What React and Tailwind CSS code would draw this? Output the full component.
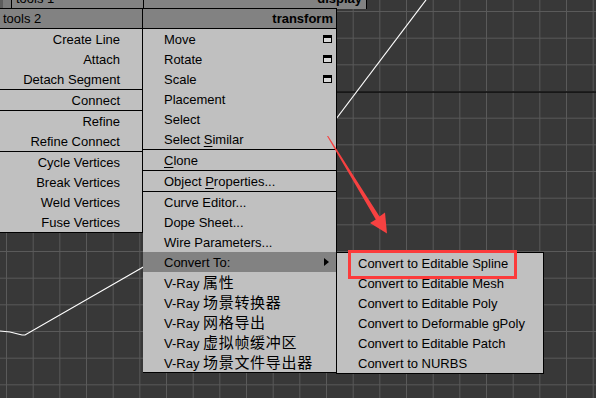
import React from "react";

const FONT = "font-['Liberation_Sans','Noto_Sans_CJK_SC',sans-serif]";

function Row({ children, right, icon, arrow, active }) {
  return (
    <div
      className={`h-[20px] pt-[1px] leading-[19px] flex items-center whitespace-nowrap ${
        right ? "justify-end pr-[22px]" : "pl-[21px] pr-[3px]"
      } ${active ? "bg-[#828282]" : ""}`}
    >
      <span className={right ? "" : "flex-1"}>{children}</span>
      {icon && (
        <span className="w-[9px] h-[8px] mr-[1px] -mt-[1px] border border-black border-t-[3px] bg-[#d8d8d8]" />
      )}
      {arrow && (
        <span className="mr-[4px] -mt-[1px] w-0 h-0 border-y-[4px] border-y-transparent border-l-[5px] border-l-black" />
      )}
    </div>
  );
}

function Cjk({ children }) {
  return <span className="text-[15px] tracking-[0.7px]">{children}</span>;
}

function Viewport() {
  const vs = [];
  for (let i = 0; i < 23; i++) vs.push(6.5 + i * 26.667);
  const hs = [];
  for (let i = 0; i < 16; i++) hs.push(11.5 + i * 26.667);
  return (
    <svg className="absolute inset-0" width="596" height="398">
      <rect width="596" height="398" fill="#383838" />
      {vs.map((x) => (
        <line key={"v" + x} x1={x} y1="0" x2={x} y2="398" stroke="#5a5a5a" strokeWidth="1" />
      ))}
      {hs.map((y) => (
        <line key={"h" + y} x1="0" y1={y} x2="596" y2={y} stroke="#5a5a5a" strokeWidth="1" />
      ))}
      <line x1="0" y1="92" x2="596" y2="92" stroke="#0c0c0c" strokeWidth="1.5" />
      <polyline points="0,331 10,332 22,335 25,335 145,266" fill="none" stroke="#fff" strokeWidth="1.2" />
      <polyline points="330,127 426,0" fill="none" stroke="#fff" strokeWidth="1.2" />
    </svg>
  );
}

export default function App() {
  return (
    <div className={`relative w-[596px] h-[398px] overflow-hidden text-[13px] text-black ${FONT}`}>
      <Viewport />

      {/* cropped upper quad headers */}
      <div className="absolute left-0 top-0 flex h-[9px]">
        <div className="w-[11px] bg-[#7a7a7a] border-l-[3px] border-[#5c5c5c]" />
        <div className="w-[132px] bg-[#828282] border-l border-black overflow-hidden">
          <div className="-mt-[10px] pl-[4px] leading-[18px]">tools 1</div>
        </div>
        <div className="w-[224px] bg-[#828282] border-x border-black overflow-hidden">
          <div className="-mt-[10px] pr-[4px] leading-[18px] text-right font-bold">display</div>
        </div>
      </div>

      {/* quad menu */}
      <div className="absolute left-0 top-[8px] flex items-start">
        <div className="w-[143px] border-r border-black">
          <div className="h-[21px] bg-[#828282] border-y border-black leading-[19px] pl-[3px]">tools 2</div>
          <div className="bg-[#c0c0c0] border-b border-black">
            <Row right>Create Line</Row>
            <Row right>Attach</Row>
            <Row right>Detach Segment</Row>
            <div className="border-t border-black">
              <Row right>Connect</Row>
            </div>
            <div className="border-t border-black">
              <Row right>Refine</Row>
              <Row right>Refine Connect</Row>
            </div>
            <div className="border-t border-black">
              <Row right>Cycle Vertices</Row>
              <Row right>Break Vertices</Row>
              <Row right>Weld Vertices</Row>
              <Row right>Fuse Vertices</Row>
            </div>
          </div>
        </div>
        <div className="w-[194px] border-r border-black">
          <div className="h-[21px] bg-[#828282] border-y border-black leading-[19px] pr-[3px] text-right font-bold">
            transform
          </div>
          <div className="bg-[#c0c0c0] border-b border-black">
            <Row icon>Move</Row>
            <Row icon>Rotate</Row>
            <Row icon>Scale</Row>
            <Row>Placement</Row>
            <Row>Select</Row>
            <Row>
              Select <span className="underline underline-offset-2">S</span>imilar
            </Row>
            <div className="border-t border-black">
              <Row>
                <span className="underline underline-offset-2">C</span>lone
              </Row>
            </div>
            <div className="border-t border-black">
              <Row>
                Object <span className="underline underline-offset-2">P</span>roperties...
              </Row>
            </div>
            <div className="border-t border-black">
              <Row>Curve Editor...</Row>
              <Row>Dope Sheet...</Row>
              <Row>Wire Parameters...</Row>
              <Row arrow active>
                Convert To:
              </Row>
              <Row>
                V-Ray <Cjk>属性</Cjk>
              </Row>
              <Row>
                V-Ray <Cjk>场景转换器</Cjk>
              </Row>
              <Row>
                V-Ray <Cjk>网格导出</Cjk>
              </Row>
              <Row>
                V-Ray <Cjk>虚拟帧缓冲区</Cjk>
              </Row>
              <Row>
                V-Ray <Cjk>场景文件导出器</Cjk>
              </Row>
            </div>
          </div>
        </div>
      </div>

      {/* submenu */}
      <div className="absolute left-[336px] top-[252px] w-[208px] bg-[#c0c0c0] border border-black">
        <Row>Convert to Editable Spline</Row>
        <Row>Convert to Editable Mesh</Row>
        <Row>Convert to Editable Poly</Row>
        <Row>Convert to Deformable gPoly</Row>
        <Row>Convert to Editable Patch</Row>
        <Row>Convert to NURBS</Row>
      </div>

      {/* annotation */}
      <div className="absolute left-[348px] top-[250px] w-[169px] h-[29px] border-[3px] border-[#fc3b3b]" />
      <svg className="absolute inset-0 pointer-events-none" width="596" height="398">
        <polygon
          points="327,136 328.2,136 379.5,216.5 385,212.5 387,233.5 370,223 375.8,219.5"
          fill="#f74141"
        />
      </svg>
    </div>
  );
}
